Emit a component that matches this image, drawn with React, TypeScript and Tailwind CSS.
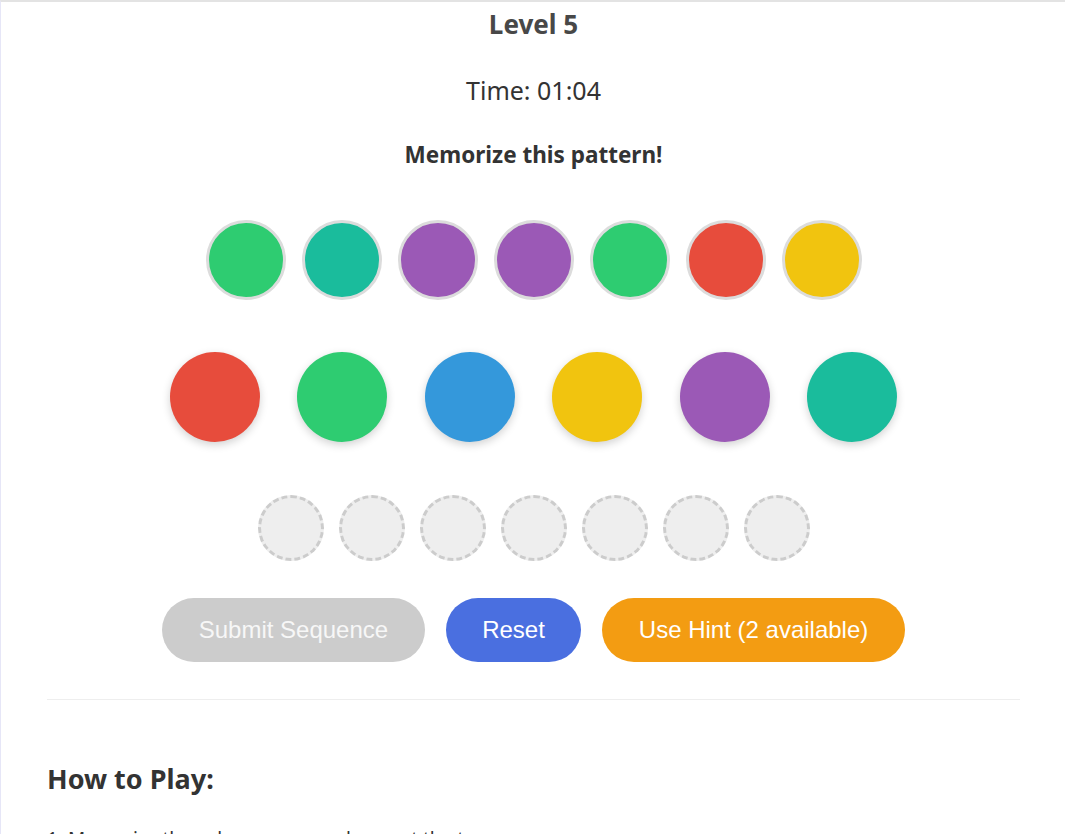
import React from "react";

const pattern = ["#2ecc71", "#1abc9c", "#9b59b6", "#9b59b6", "#2ecc71", "#e74c3c", "#f1c40f"];
const palette = ["#e74c3c", "#2ecc71", "#3498db", "#f1c40f", "#9b59b6", "#1abc9c"];

const App: React.FC = () => {
  const slots = Array.from({ length: 7 });

  return (
    <div
      className="min-h-[834px] bg-white border-t-2 border-l border-t-[#e3e3e3] border-l-[#e6e6f7] text-[#333]"
      style={{ fontFamily: '"Noto Sans", "Open Sans", sans-serif' }}
    >
      <div className="pl-[46px] pr-[45px] flex flex-col items-center">
        <h2 className="mt-[6px] h-8 leading-8 text-[26px] font-bold text-[#484848]">Level 5</h2>
        <div className="mt-[34px] h-8 leading-8 text-[25px]">Time: 01:04</div>
        <p className="mt-[35px] h-7 leading-7 text-[22.5px] font-bold">Memorize this pattern!</p>

        <div className="mt-[51px] flex gap-4">
          {pattern.map((c, i) => (
            <div
              key={i}
              className="w-20 h-20 rounded-full border-[3px] border-[#dcdcdc]"
              style={{ backgroundColor: c }}
            />
          ))}
        </div>

        <div className="mt-[52px] flex gap-[37.5px]">
          {palette.map((c, i) => (
            <button
              key={i}
              className="w-[90px] h-[90px] rounded-full shadow-[0_3px_8px_rgba(0,0,0,0.18)]"
              style={{ backgroundColor: c }}
            />
          ))}
        </div>

        <div className="mt-[53px] flex gap-[15px]">
          {slots.map((_, i) => (
            <div key={i} className="w-[66px] h-[66px] rounded-full bg-[#eeeeee] border-[3px] border-dashed border-[#cccccc]" />
          ))}
        </div>

        <div
          className="mt-[37px] flex gap-[21px] text-[24px] text-white"
          style={{ fontFamily: '"Liberation Sans", Arial, sans-serif' }}
        >
          <button className="h-16 px-[36.5px] rounded-full bg-[#cccccc] text-[#f7f7f7]">Submit Sequence</button>
          <button className="h-16 px-[36.5px] rounded-full bg-[#4a6fe0]">Reset</button>
          <button className="h-16 px-[36.5px] rounded-full bg-[#f39c12]">Use Hint (2 available)</button>
        </div>

        <hr className="mt-[37px] w-full border-t border-[#eeeeee]" />

        <div className="w-full mt-[63px]">
          <h3 className="h-8 leading-8 text-[27px] font-bold">How to Play:</h3>
          <ol className="mt-[30px] text-[19px] leading-7">
            <li>1. Memorize the color sequence shown at the top</li>
            <li>2. Click the colored circles to repeat the sequence</li>
          </ol>
        </div>
      </div>
    </div>
  );
};

export default App;
